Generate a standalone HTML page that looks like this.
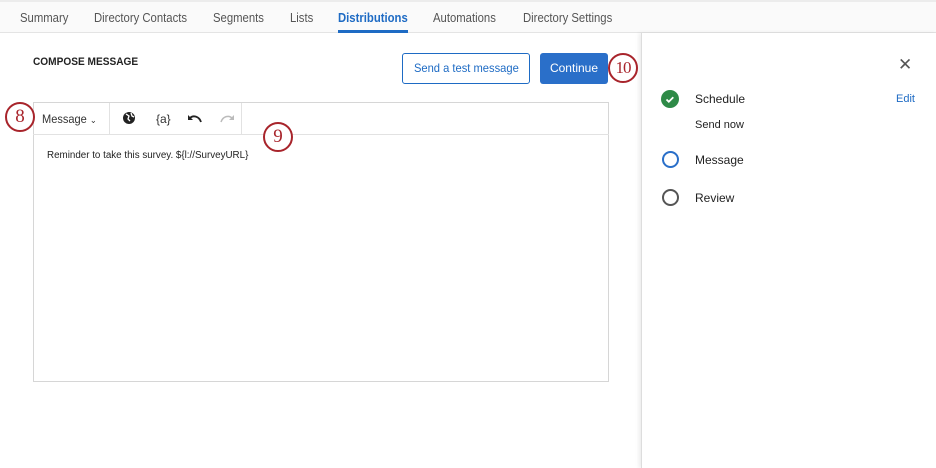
<!DOCTYPE html><html><head><style>
body{margin:0;width:936px;height:468px;background:#fff;font-family:"Liberation Sans",sans-serif;position:relative;overflow:hidden;color:#222}
.a{position:absolute}
.tab{position:absolute;top:10px;font-size:13px;color:#555;transform:scaleX(.87);transform-origin:left;white-space:nowrap}
.circ{position:absolute;width:30px;height:30px;border:2.5px solid #a8242b;border-radius:50%;background:#fff;box-sizing:border-box;text-align:center;line-height:25px;font-size:19px;color:#a8242b;font-family:"Liberation Serif",serif}
</style></head><body>
<div class="a" style="left:0;top:0;width:936px;height:33px;background:#fafafa;border-top:2px solid #ececec;border-bottom:1px solid #e4e4e4;box-sizing:border-box"></div>
<div class="tab" style="left:20px">Summary</div>
<div class="tab" style="left:94px">Directory Contacts</div>
<div class="tab" style="left:213px">Segments</div>
<div class="tab" style="left:290px">Lists</div>
<div class="tab" style="left:338px;color:#1e6bc4;font-weight:bold">Distributions</div>
<div class="a" style="left:338px;top:30px;width:70px;height:3px;background:#1e6bc4"></div>
<div class="tab" style="left:433px">Automations</div>
<div class="tab" style="left:523px">Directory Settings</div>

<div class="a" style="left:33px;top:56px;font-size:11px;font-weight:bold;color:#222;transform:scaleX(.92);transform-origin:left">COMPOSE MESSAGE</div>
<div class="a" style="left:402px;top:53px;width:128px;height:31px;border:1px solid #1e6bc4;border-radius:3px;box-sizing:border-box;color:#1e6bc4;font-size:12px;text-align:center;line-height:29px"><span style="display:inline-block;transform:scaleX(.93)">Send a test message</span></div>
<div class="a" style="left:540px;top:53px;width:68px;height:31px;background:#2a6fc9;border-radius:3px;color:#fff;font-size:12px;text-align:center;line-height:31px">Continue</div>

<div class="a" style="left:33px;top:102px;width:576px;height:280px;border:1px solid #d6d6d6;box-sizing:border-box"></div>
<div class="a" style="left:33px;top:134px;width:576px;height:1px;background:#e2e2e2"></div>
<div class="a" style="left:109px;top:103px;width:1px;height:31px;background:#e2e2e2"></div>
<div class="a" style="left:241px;top:103px;width:1px;height:31px;background:#e2e2e2"></div>
<div class="a" style="left:42px;top:112px;font-size:12px;color:#333;transform:scaleX(.92);transform-origin:left">Message <span style="font-size:9px">&#8964;</span></div>
<svg class="a" style="left:122px;top:111px" width="14" height="14" viewBox="0 0 14 14"><circle cx="7" cy="7" r="6" fill="#222"/><path d="M4 3l3 2-1 3 2 2M9 2l1 3 2 1" stroke="#fff" stroke-width="1.3" fill="none"/></svg>
<div class="a" style="left:156px;top:112px;font-size:12px;color:#333">{a}</div>
<svg class="a" style="left:187px;top:113px" width="16" height="10" viewBox="0 0 16 10"><path d="M14 9C12 3 6 2 3 5" stroke="#222" stroke-width="1.8" fill="none"/><path d="M1 2v5h5z" fill="#222"/></svg>
<svg class="a" style="left:219px;top:113px" width="16" height="10" viewBox="0 0 16 10"><path d="M2 9C4 3 10 2 13 5" stroke="#bbb" stroke-width="1.5" fill="none"/><path d="M15 2v5h-5z" fill="#bbb"/></svg>
<div class="a" style="left:47px;top:150px;font-size:10px;color:#222;transform:scaleX(.98);transform-origin:left">Reminder to take this survey. ${l://SurveyURL}</div>

<div class="a" style="left:641px;top:33px;width:295px;height:435px;border-left:1px solid #ddd;box-shadow:-2px 0 4px rgba(0,0,0,.08);background:#fff"></div>
<div class="a" style="left:898px;top:55px;font-size:17px;color:#555">&#x2715;</div>
<svg class="a" style="left:661px;top:90px" width="18" height="18"><circle cx="9" cy="9" r="9" fill="#2e8a47"/><path d="M5.5 9.5l2.3 2.2 4.5-4.5" stroke="#fff" stroke-width="1.8" fill="none"/></svg>
<div class="a" style="left:695px;top:92px;font-size:12px">Schedule</div>
<div class="a" style="left:896px;top:93px;font-size:11px;color:#1e6bc4">Edit</div>
<div class="a" style="left:695px;top:119px;font-size:11px">Send now</div>
<div class="a" style="left:662px;top:151px;width:17px;height:17px;border:2px solid #2a6fc9;border-radius:50%;box-sizing:border-box"></div>
<div class="a" style="left:695px;top:153px;font-size:12px">Message</div>
<div class="a" style="left:662px;top:189px;width:17px;height:17px;border:2px solid #555;border-radius:50%;box-sizing:border-box"></div>
<div class="a" style="left:695px;top:191px;font-size:12px">Review</div>

<div class="circ" style="left:5px;top:102px">8</div>
<div class="circ" style="left:263px;top:122px">9</div>
<div class="circ" style="left:608px;top:53px;font-size:17px;letter-spacing:-1px">10</div>
</body></html>
